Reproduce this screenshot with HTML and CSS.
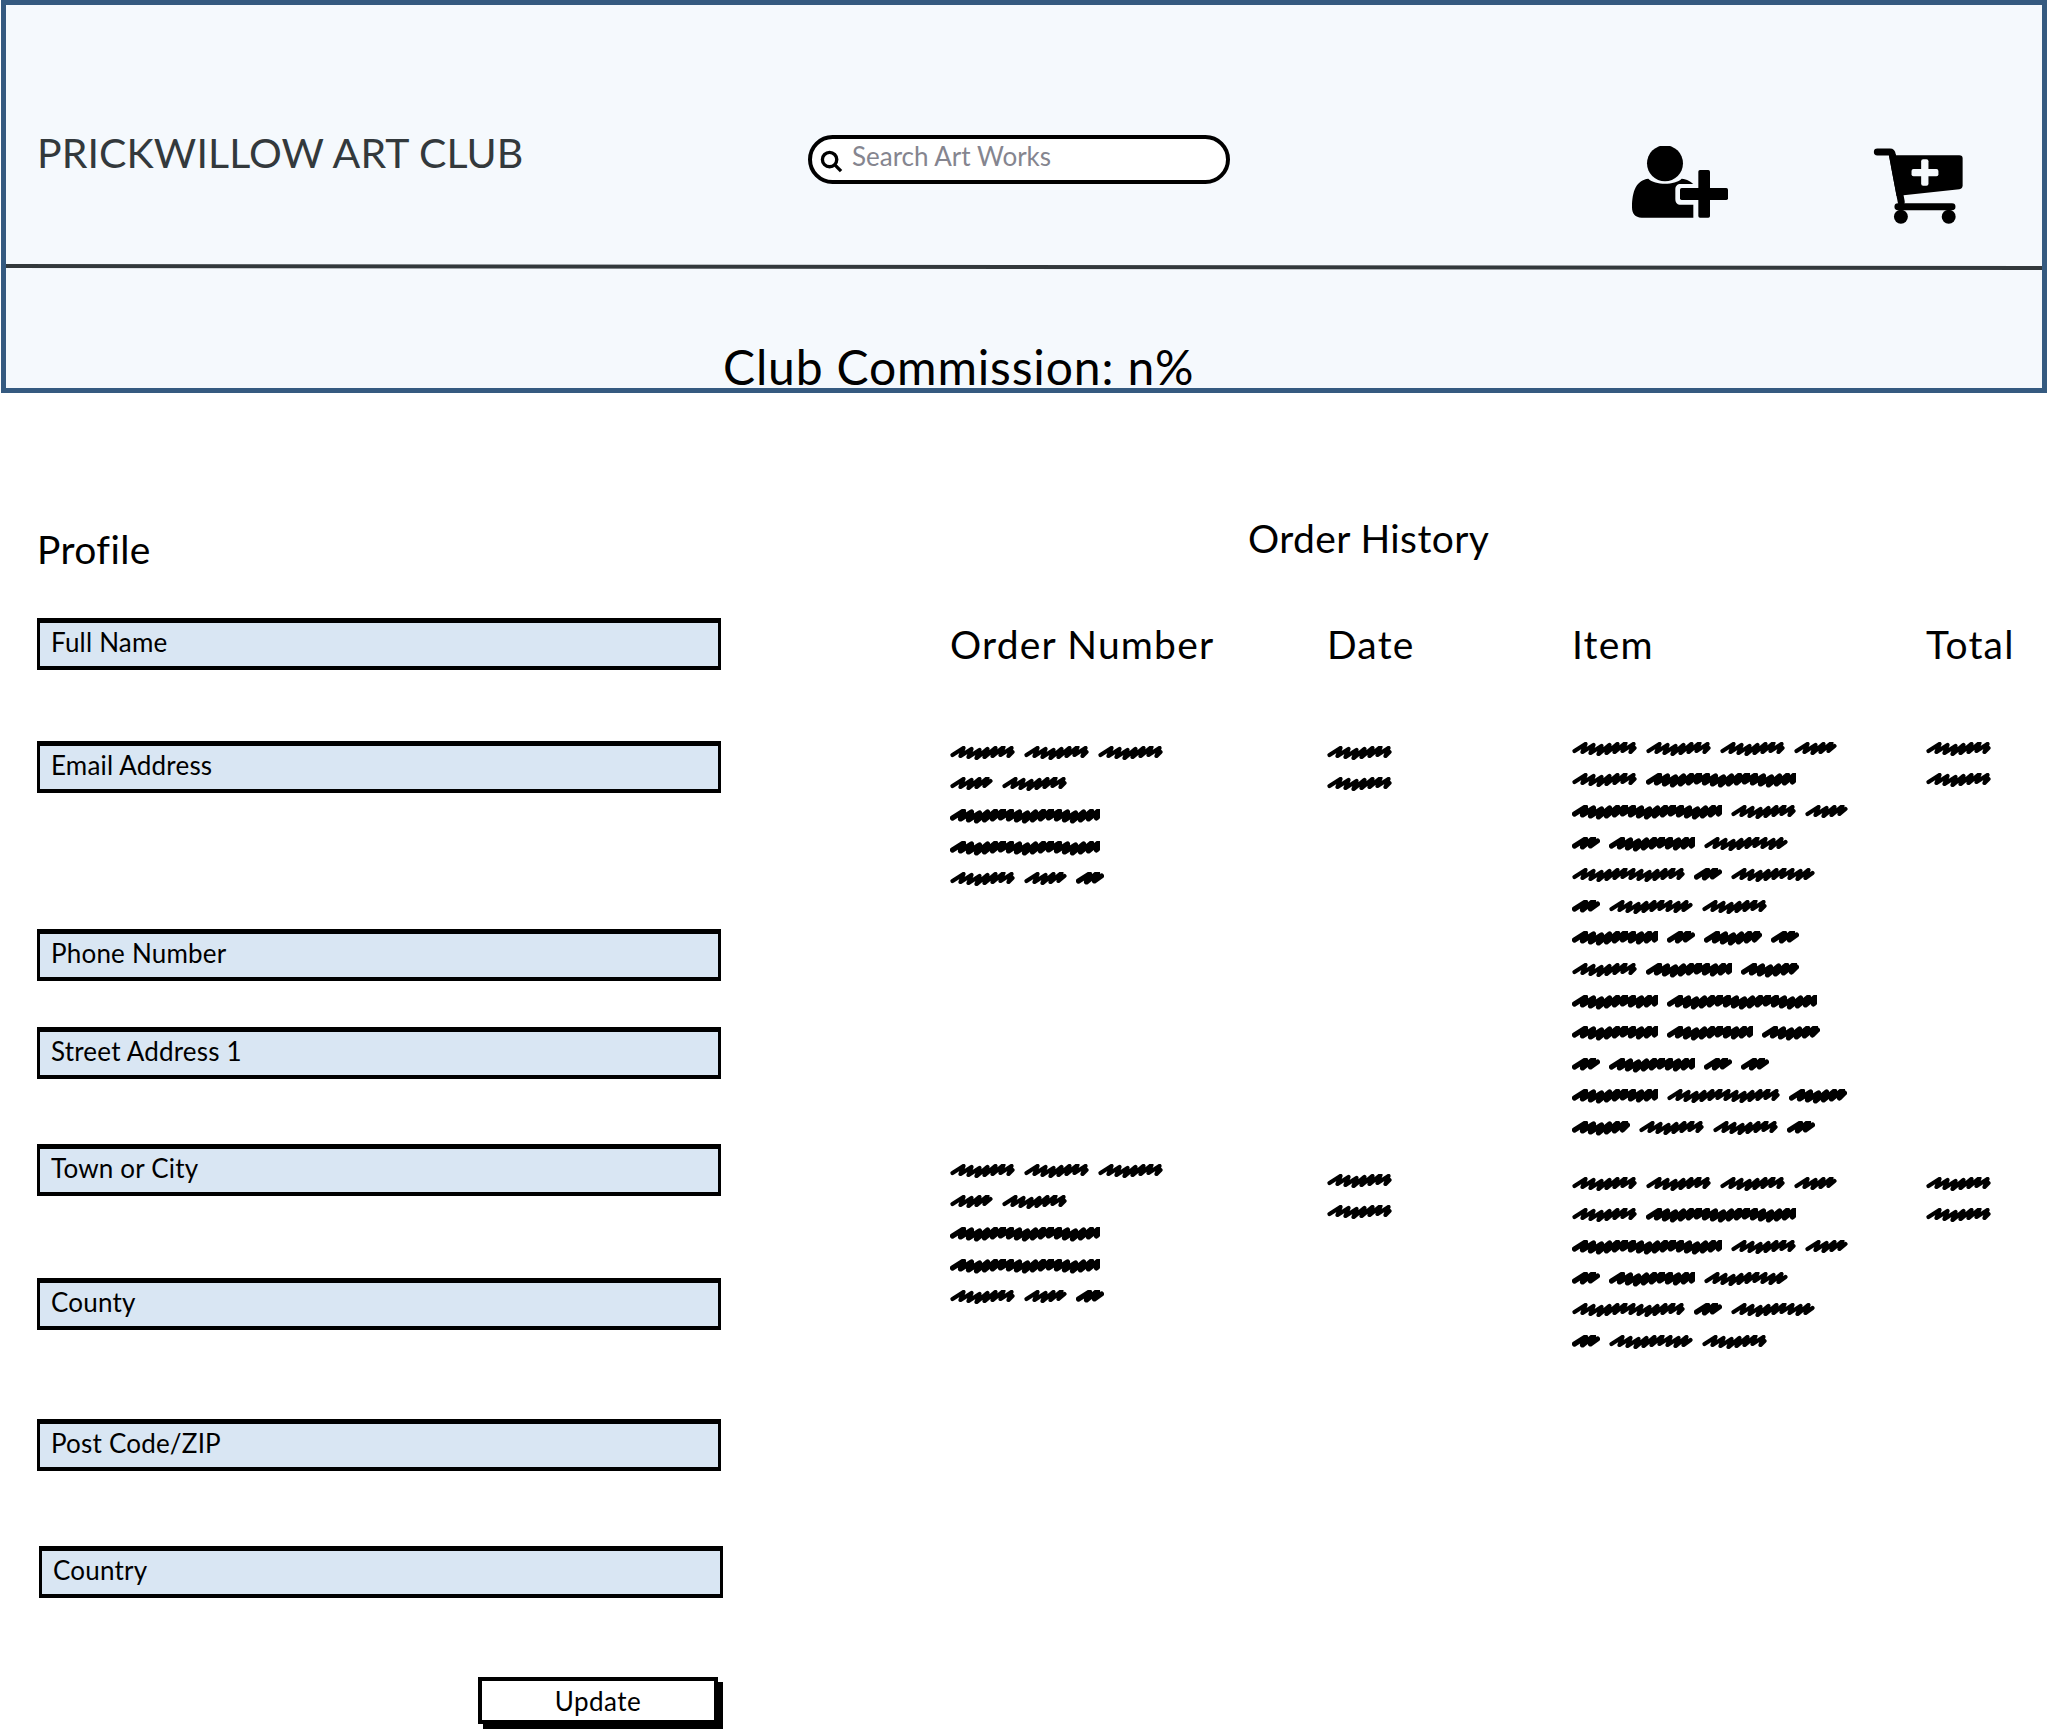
FILE: index.html
```html
<!DOCTYPE html>
<html lang="en">
<head>
  <meta charset="UTF-8">
  <title>Profile - Prickwillow Art Club</title>
  <link rel="stylesheet" href="styles.css">
</head>
<body>

  <!-- scribbles standing in for body text, one per word length -->
  <svg class="defs" aria-hidden="true">
    <symbol id="s28"><path d="M2.5 9l11-7-3 8 11-9-3 8 7-5"/></symbol>
    <symbol id="s43"><path d="M2.5 9l11-7-3 8 11-7-3 8 11-9-3 8 11-9-3 8 6-5"/></symbol>
    <symbol id="s58"><path d="M2.5 9l11-7-3 8 11-7-3 8 11-7-3 8 11-9-3 8 11-9-3 8 11-9-3 8 5-5"/></symbol>
    <symbol id="s65"><path d="M2.5 9l11-7-3 8 11-7-3 8 11-7-3 8 11-9-3 8 11-9-3 8 11-9-3 8 11-7-3 8 4-4"/></symbol>
    <symbol id="s84"><path d="M2.5 9l11-7-3 8 11-7-3 8 11-7-3 8 11-9-3 8 11-9-3 8 11-9-3 8 11-7-3 8 11-7-3 8 11-9-3 8 7-5"/></symbol>
    <symbol id="s86"><path d="M2.5 9l11-7-3 8 11-7-3 8 11-7-3 8 11-9-3 8 11-9-3 8 11-9-3 8 11-7-3 8 11-7-3 8 11-9-3 8 11-9-3 8 2-2"/></symbol>
    <symbol id="s113"><path d="M2.5 9l11-7-3 8 11-7-3 8 11-7-3 8 11-9-3 8 11-9-3 8 11-9-3 8 11-7-3 8 11-7-3 8 11-7-3 8 11-9-3 8 11-9-3 8 11-9-3 8 11-7-3 8 4-4"/></symbol>
    <symbol id="s150"><path d="M2.5 9l11-7-3 8 11-7-3 8 11-7-3 8 11-9-3 8 11-9-3 8 11-9-3 8 11-7-3 8 11-7-3 8 11-7-3 8 11-9-3 8 11-9-3 8 11-9-3 8 11-7-3 8 11-7-3 8 11-7-3 8 11-9-3 8 11-9-3 8 11-9-3 8 1-1"/></symbol>
  </svg>

  <header class="site-header">
    <div class="top-bar">
      <div class="brand">PRICKWILLOW ART CLUB</div>
      <form class="search">
        <svg class="search-icon" viewBox="0 0 24 24"><circle cx="10" cy="10" r="7.5"/><path d="M15.5 15.5L22 22"/></svg>
        <input type="text" placeholder="Search Art Works">
      </form>
      <svg class="icon-user" viewBox="96 78 288 216">
        <circle cx="195" cy="130" r="54"/>
        <path d="M96 262C96 212 110 180 145 176C165 196 225 196 245 176C262 178 272 185 280 192H242C232 192 226 198 226 208V236C226 248 232 254 242 254H280V293H125C105 293 96 280 96 262Z"/>
        <rect x="295" y="150" width="35" height="143" rx="5"/>
        <rect x="240" y="204" width="144" height="36" rx="5"/>
      </svg>
      <svg class="icon-cart" viewBox="815 80 275 235">
        <path class="cart-frame" d="M830 95H868Q874 95 875 103L902 245"/>
        <path d="M865 105H1077Q1087 105 1087 115V195Q1087 205 1077 207L888 228Z"/>
        <path class="cart-frame" d="M892 260H1055"/>
        <circle cx="901" cy="290" r="21"/>
        <circle cx="1045" cy="290" r="21"/>
        <rect class="cart-plus" x="962" y="117" width="22" height="80" rx="6"/>
        <rect class="cart-plus" x="933" y="146" width="81" height="22" rx="6"/>
      </svg>
    </div>
    <div class="divider"></div>
    <div class="commission">Club Commission: n%</div>
  </header>

  <main class="page">
    <section class="profile">
      <h2>Profile</h2>
      <form>
        <input class="field" type="text" placeholder="Full Name">
        <input class="field field-email" type="text" placeholder="Email Address">
        <input class="field field-phone" type="text" placeholder="Phone Number">
        <input class="field field-street" type="text" placeholder="Street Address 1">
        <input class="field field-town" type="text" placeholder="Town or City">
        <input class="field field-county" type="text" placeholder="County">
        <input class="field field-post" type="text" placeholder="Post Code/ZIP">
        <input class="field field-country" type="text" placeholder="Country">
        <button type="button">Update</button>
      </form>
    </section>

    <section class="orders">
      <h2>Order History</h2>
      <div class="order-table">
        <div class="col-head">Order Number</div>
        <div class="col-head">Date</div>
        <div class="col-head">Item</div>
        <div class="col-head">Total</div>

        <div class="cell first-order">
          <div class="line"><svg class="w65"><use href="#s65"/></svg><svg class="w65"><use href="#s65"/></svg><svg class="w65"><use href="#s65"/></svg></div>
          <div class="line"><svg class="w43"><use href="#s43"/></svg><svg class="w65"><use href="#s65"/></svg></div>
          <div class="line"><svg class="w150 dense"><use href="#s150"/></svg></div>
          <div class="line"><svg class="w150 dense"><use href="#s150"/></svg></div>
          <div class="line"><svg class="w65"><use href="#s65"/></svg><svg class="w43"><use href="#s43"/></svg><svg class="w28 dense"><use href="#s28"/></svg></div>
        </div>
        <div class="cell first-order">
          <div class="line"><svg class="w65"><use href="#s65"/></svg></div>
          <div class="line"><svg class="w65"><use href="#s65"/></svg></div>
        </div>
        <div class="cell">
          <div class="line"><svg class="w65"><use href="#s65"/></svg><svg class="w65"><use href="#s65"/></svg><svg class="w65"><use href="#s65"/></svg><svg class="w43"><use href="#s43"/></svg></div>
          <div class="line"><svg class="w65"><use href="#s65"/></svg><svg class="w150 dense"><use href="#s150"/></svg></div>
          <div class="line"><svg class="w150 dense"><use href="#s150"/></svg><svg class="w65"><use href="#s65"/></svg><svg class="w43"><use href="#s43"/></svg></div>
          <div class="line"><svg class="w28 dense"><use href="#s28"/></svg><svg class="w86 dense"><use href="#s86"/></svg><svg class="w84"><use href="#s84"/></svg></div>
          <div class="line"><svg class="w113"><use href="#s113"/></svg><svg class="w28 dense"><use href="#s28"/></svg><svg class="w84"><use href="#s84"/></svg></div>
          <div class="line"><svg class="w28 dense"><use href="#s28"/></svg><svg class="w84"><use href="#s84"/></svg><svg class="w65"><use href="#s65"/></svg></div>
          <div class="line"><svg class="w86 dense"><use href="#s86"/></svg><svg class="w28 dense"><use href="#s28"/></svg><svg class="w58 dense"><use href="#s58"/></svg><svg class="w28 dense"><use href="#s28"/></svg></div>
          <div class="line"><svg class="w65"><use href="#s65"/></svg><svg class="w86 dense"><use href="#s86"/></svg><svg class="w58 dense"><use href="#s58"/></svg></div>
          <div class="line"><svg class="w86 dense"><use href="#s86"/></svg><svg class="w150 dense"><use href="#s150"/></svg></div>
          <div class="line"><svg class="w86 dense"><use href="#s86"/></svg><svg class="w86 dense"><use href="#s86"/></svg><svg class="w58 dense"><use href="#s58"/></svg></div>
          <div class="line"><svg class="w28 dense"><use href="#s28"/></svg><svg class="w86 dense"><use href="#s86"/></svg><svg class="w28 dense"><use href="#s28"/></svg><svg class="w28 dense"><use href="#s28"/></svg></div>
          <div class="line"><svg class="w86 dense"><use href="#s86"/></svg><svg class="w113"><use href="#s113"/></svg><svg class="w58 dense"><use href="#s58"/></svg></div>
          <div class="line"><svg class="w58 dense"><use href="#s58"/></svg><svg class="w65"><use href="#s65"/></svg><svg class="w65"><use href="#s65"/></svg><svg class="w28 dense"><use href="#s28"/></svg></div>
        </div>
        <div class="cell">
          <div class="line"><svg class="w65"><use href="#s65"/></svg></div>
          <div class="line"><svg class="w65"><use href="#s65"/></svg></div>
        </div>

        <div class="cell second-order">
          <div class="line"><svg class="w65"><use href="#s65"/></svg><svg class="w65"><use href="#s65"/></svg><svg class="w65"><use href="#s65"/></svg></div>
          <div class="line"><svg class="w43"><use href="#s43"/></svg><svg class="w65"><use href="#s65"/></svg></div>
          <div class="line"><svg class="w150 dense"><use href="#s150"/></svg></div>
          <div class="line"><svg class="w150 dense"><use href="#s150"/></svg></div>
          <div class="line"><svg class="w65"><use href="#s65"/></svg><svg class="w43"><use href="#s43"/></svg><svg class="w28 dense"><use href="#s28"/></svg></div>
        </div>
        <div class="cell second-date">
          <div class="line"><svg class="w65"><use href="#s65"/></svg></div>
          <div class="line"><svg class="w65"><use href="#s65"/></svg></div>
        </div>
        <div class="cell second-item">
          <div class="line"><svg class="w65"><use href="#s65"/></svg><svg class="w65"><use href="#s65"/></svg><svg class="w65"><use href="#s65"/></svg><svg class="w43"><use href="#s43"/></svg></div>
          <div class="line"><svg class="w65"><use href="#s65"/></svg><svg class="w150 dense"><use href="#s150"/></svg></div>
          <div class="line"><svg class="w150 dense"><use href="#s150"/></svg><svg class="w65"><use href="#s65"/></svg><svg class="w43"><use href="#s43"/></svg></div>
          <div class="line"><svg class="w28 dense"><use href="#s28"/></svg><svg class="w86 dense"><use href="#s86"/></svg><svg class="w84"><use href="#s84"/></svg></div>
          <div class="line"><svg class="w113"><use href="#s113"/></svg><svg class="w28 dense"><use href="#s28"/></svg><svg class="w84"><use href="#s84"/></svg></div>
          <div class="line"><svg class="w28 dense"><use href="#s28"/></svg><svg class="w84"><use href="#s84"/></svg><svg class="w65"><use href="#s65"/></svg></div>
        </div>
        <div class="cell second-item">
          <div class="line"><svg class="w65"><use href="#s65"/></svg></div>
          <div class="line"><svg class="w65"><use href="#s65"/></svg></div>
        </div>
      </div>
    </section>
  </main>

</body>
</html>
```

FILE: styles.css
```css
body {
  margin: 0;
  width: 2050px;
  height: 1730px;
  overflow: hidden;
  background: white;
  color: black;
  font-family: Lato, "Noto Sans", sans-serif;
}

.defs {
  display: none;
}

/* header */
.site-header {
  box-sizing: border-box;
  width: 2046px;
  height: 393px;
  margin-left: 1px;
  background: #f5f9fd;
  border: 5px solid #355a80;
}

.top-bar {
  display: flex;
  align-items: flex-start;
  height: 260px;
  padding-left: 31px;
}

.divider {
  height: 4px;
  background: #33393c;
  transform: rotate(0.06deg);
}

.brand {
  width: 771px;
  margin-top: 123px;
  font-size: 41px;
  letter-spacing: 0.1px;
  line-height: 50px;
  color: #33393c;
}

.search {
  display: flex;
  align-items: center;
  box-sizing: border-box;
  width: 422px;
  height: 49px;
  margin-top: 130px;
  padding-left: 8px;
  background: white;
  border: 4px solid black;
  border-radius: 25px;
}

.search-icon {
  width: 23px;
  height: 23px;
  margin-top: 3px;
  fill: none;
  stroke: black;
  stroke-width: 3.5;
}

.search input {
  width: 340px;
  margin: -7px 0 0 9px;
  padding: 0;
  border: none;
  outline: none;
  background: transparent;
  font: 26px Lato, "Noto Sans", sans-serif;
}

.search input::placeholder {
  color: #85858f;
  opacity: 1;
}

.icon-user {
  width: 96px;
  height: 72px;
  margin: 141px 0 0 402px;
}

.icon-cart {
  width: 92px;
  height: 78px;
  margin: 142px 0 0 144px;
}

.cart-frame {
  fill: none;
  stroke: black;
  stroke-width: 21;
  stroke-linecap: round;
}

.cart-plus {
  fill: #f5f9fd;
}

.commission {
  padding: 70px 0 0 717px;
  font-size: 48px;
  letter-spacing: 0.85px;
  line-height: 56px;
}

/* main area */
.page {
  display: flex;
  padding: 122px 0 0 37px;
}

h2 {
  margin: 0;
  font-size: 39px;
  font-weight: normal;
  letter-spacing: 0.4px;
  line-height: 46px;
}

.profile {
  width: 913px;
}

.profile h2 {
  margin: 11px 0 46px 0;
}

.field {
  display: block;
  box-sizing: border-box;
  width: 684px;
  height: 52px;
  padding: 0 0 6px 11px;
  background: #d9e6f3;
  border: 4px solid black;
  border-width: 5px 3px 4px;
  font: 26px Lato, "Noto Sans", sans-serif;
  letter-spacing: 0.2px;
}

.field::placeholder {
  color: black;
  opacity: 1;
}

.field-email { margin-top: 71px; }
.field-phone { margin-top: 136px; }
.field-street { margin-top: 46px; }
.field-town { margin-top: 65px; }
.field-county { margin-top: 82px; }
.field-post { margin-top: 89px; }
.field-country { margin: 75px 0 0 2px; }

button {
  display: block;
  box-sizing: border-box;
  width: 240px;
  height: 47px;
  margin: 79px 0 0 441px;
  background: white;
  border: 4px solid black;
  box-shadow: 5px 5px 0 black;
  font: 26px Lato, "Noto Sans", sans-serif;
  letter-spacing: 0.5px;
  cursor: pointer;
}

.orders h2 {
  margin-left: 298px;
}

.order-table {
  display: grid;
  grid-template-columns: 377px 245px 354px 120px;
  margin-top: 60px;
}

.col-head {
  margin-bottom: 67px;
  font-size: 39px;
  letter-spacing: 1.2px;
  line-height: 46px;
}

.cell {
  height: 411px;
}

.first-order { padding-top: 4px; }
.second-order { padding-top: 7px; }
.second-date { padding-top: 17px; }
.second-item { padding-top: 20px; }

.line {
  display: flex;
  align-items: center;
  gap: 9px;
  height: 31.6px;
}

/* scribbled words */
.line svg {
  display: block;
  height: 16px;
  flex: none;
  fill: none;
  stroke: black;
  stroke-width: 4.2;
  stroke-linecap: round;
  stroke-linejoin: round;
}

.line svg.dense { stroke-width: 5.2; }

.w28 { width: 28px; }
.w43 { width: 43px; }
.w58 { width: 58px; }
.w65 { width: 65px; }
.w84 { width: 84px; }
.w86 { width: 86px; }
.w113 { width: 113px; }
.w150 { width: 150px; }
```
